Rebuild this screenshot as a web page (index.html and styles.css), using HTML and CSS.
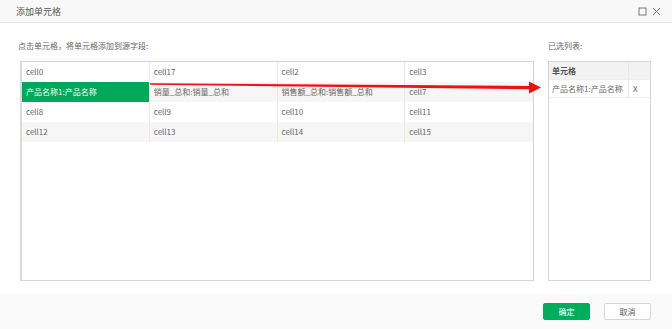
FILE: index.html
```html
<!DOCTYPE html>
<html>
<head>
<meta charset="utf-8">
<link rel="stylesheet" href="styles.css">
</head>
<body>
<div class="dialog">
  <div class="header">
    <span class="title">添加单元格</span>
    <div class="tools">
      <svg width="9" height="9" viewBox="0 0 9 9"><rect x="1" y="1" width="7" height="7" fill="none" stroke="#777" stroke-width="1"/></svg>
      <svg width="9" height="9" viewBox="0 0 9 9"><path d="M1 1L8 8M8 1L1 8" stroke="#777" stroke-width="1"/></svg>
    </div>
  </div>
  <div class="main">
    <div class="leftcol">
      <div class="label">点击单元格，将单元格添加到源字段:</div>
      <div class="box">
        <div class="grid">
          <div class="cell">cell0</div><div class="cell">cell17</div><div class="cell">cell2</div><div class="cell">cell3</div>
          <div class="cell alt sel">产品名称1:产品名称</div><div class="cell alt">销量_总和:销量_总和</div><div class="cell alt">销售额_总和:销售额_总和</div><div class="cell alt">cell7</div>
          <div class="cell">cell8</div><div class="cell">cell9</div><div class="cell">cell10</div><div class="cell">cell11</div>
          <div class="cell alt">cell12</div><div class="cell alt">cell13</div><div class="cell alt">cell14</div><div class="cell alt">cell15</div>
        </div>
      </div>
    </div>
    <div class="rightcol">
      <div class="label">已选列表:</div>
      <div class="box rbox">
        <div class="rrow head"><div class="rc1">单元格</div><div class="rc2"></div></div>
        <div class="rrow"><div class="rc1">产品名称1:产品名称</div><div class="rc2">X</div></div>
      </div>
    </div>
    <svg class="arrow" width="672" height="329" viewBox="0 0 672 329">
      <polygon points="150,83.2 531,86 531,89.2 150,84.8" fill="#f01010"/>
      <polygon points="529,81.5 541,87.6 529,93.5" fill="#f01010"/>
    </svg>
  </div>
  <div class="footer">
    <button class="btn ok">确定</button>
    <button class="btn cancel">取消</button>
  </div>
</div>
</body>
</html>
```
FILE: styles.css
```css
* { box-sizing: border-box; }
html, body { margin: 0; padding: 0; background: #fff; }
body { font-family: "Noto Sans CJK SC", "Noto Sans", sans-serif; color: #555; }
.dialog { width: 672px; height: 329px; display: flex; flex-direction: column; position: relative; }
.header { height: 23px; background: #f8f8f8; border-bottom: 1px solid #e6e6e6; display: flex; align-items: center; justify-content: space-between; padding: 0 11px 0 16px; }
.title { font-size: 9px; color: #555; }
.tools { display: flex; gap: 5px; align-items: center; }
.tools svg { display: block; }
.main { flex: 1; display: flex; padding: 0 21px 0 20px; gap: 14px; }
.leftcol { width: 514px; display: flex; flex-direction: column; }
.rightcol { width: 103px; display: flex; flex-direction: column; }
.label { font-size: 8px; color: #666; height: 38px; padding-top: 17px; line-height: 11px; margin-left: -2px; }
.rightcol .label { margin-left: 0; }
.box { height: 220px; border: 1px solid #d6d6d6; border-left: 2px solid #d9d9d9; }
.grid { display: grid; grid-template-columns: repeat(4, 1fr); }
.cell { height: 20px; font-size: 8px; line-height: 20px; padding-left: 4px; border-right: 1px solid #e8e8e8; color: #666; white-space: nowrap; overflow: hidden; }
.cell:nth-child(4n) { border-right: none; }
.alt { background: #f6f6f6; }
.sel { background: #00a85a; color: #fff; }
.rbox { border-left: 1px solid #d6d6d6; }
.rrow { display: flex; height: 18px; border-bottom: 1px solid #eeeeee; font-size: 8px; line-height: 18px; color: #666; }
.rrow.head { background: #f2f2f2; font-weight: bold; color: #555; }
.rc1 { width: 80px; padding-left: 3px; border-right: 1px solid #e8e8e8; white-space: nowrap; overflow: hidden; }
.rc2 { flex: 1; padding-left: 4px; }
.arrow { position: absolute; left: 0; top: 0; pointer-events: none; }
.footer { height: 35px; margin-top: 13px; background: #fafafa; display: flex; justify-content: flex-end; align-items: center; gap: 14px; padding-right: 21px; }
.btn { width: 47px; height: 17px; border-radius: 2px; font-size: 8px; font-family: "Noto Sans CJK SC", sans-serif; padding: 0; cursor: pointer; }
.ok { background: #00ad5c; color: #fff; border: 1px solid #00ad5c; }
.cancel { background: #fff; color: #555; border: 1px solid #d6d6d6; }
```
